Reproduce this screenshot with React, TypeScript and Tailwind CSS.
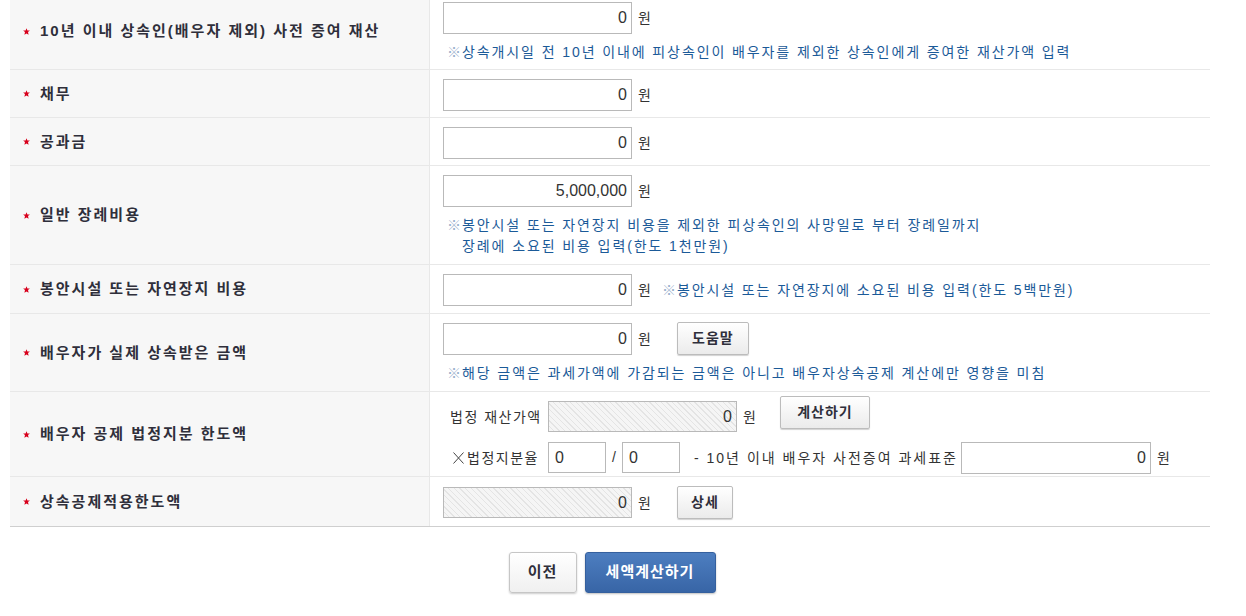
import type { ReactNode } from 'react';

const FONT = "font-['Liberation_Sans','Noto_Sans_CJK_KR',sans-serif]";

function Star() {
  return (
    <svg className="w-[7px] h-[7px] mr-[10px] shrink-0" viewBox="0 0 7 7">
      <path d="M3.5 0.3 L4.4 2.5 L6.9 2.6 L5 4.1 L5.6 6.8 L3.5 5.4 L1.4 6.8 L2 4.1 L0.1 2.6 L2.6 2.5Z" fill="#d8001c" />
    </svg>
  );
}

function Row({
  label,
  children,
  last,
  pad = 'pt-[9px] pb-[6px]',
}: {
  label: string;
  children: ReactNode;
  last?: boolean;
  pad?: string;
}) {
  return (
    <div className={last ? 'flex border-b border-[#cfcfcf]' : 'flex border-b border-[#e8e8e8]'}>
      <div className="w-[420px] shrink-0 bg-[#f7f7f7] border-r border-[#e8e8e8] flex items-center pl-[13px]">
        <Star />
        <span className="text-[15px] font-bold text-[#2f2f3b] tracking-[2px] leading-[20px]">{label}</span>
      </div>
      <div className={`flex-1 pl-[13px] ${pad}`}>{children}</div>
    </div>
  );
}

function Amount({ value = '0', disabled, w = 'w-[189px]' }: { value?: string; disabled?: boolean; w?: string }) {
  return (
    <input
      readOnly
      value={value}
      className={
        disabled
          ? `${w} shrink-0 h-[31px] border border-[#b9b9b9] text-right pr-[4px] text-[16px] text-[#333] outline-none bg-[repeating-linear-gradient(45deg,#f5f5f5_0px,#f5f5f5_3px,#e4e4e4_3px,#e4e4e4_4px)]`
          : `${w} shrink-0 h-[32px] border border-[#b9b9b9] text-right pr-[4px] text-[16px] text-[#333] outline-none bg-white`
      }
    />
  );
}

function Small() {
  return (
    <input
      readOnly
      value="0"
      className="w-[58px] shrink-0 h-[31px] border border-[#b9b9b9] text-left pl-[6px] text-[16px] text-[#333] outline-none bg-white"
    />
  );
}

function Won() {
  return <span className="ml-[6px] shrink-0 text-[14px] text-[#333] leading-[20px]">원</span>;
}

function Note({ children, inline }: { children: ReactNode; inline?: boolean }) {
  return (
    <div
      className={
        inline
          ? 'flex ml-[11px] text-[14px] leading-[21px] text-[#1b5a98] tracking-[1.9px]'
          : 'flex mt-[8px] pl-[4px] text-[14px] leading-[21px] text-[#1b5a98] tracking-[1.9px]'
      }
    >
      <span className="text-[#98afcc] tracking-normal mr-[1px]">※</span>
      <span>{children}</span>
    </div>
  );
}

function Btn({ children, w }: { children: ReactNode; w: string }) {
  return (
    <button
      className={`${w} shrink-0 h-[33px] border border-[#bcbcbc] rounded-[2px] bg-gradient-to-b from-white to-[#ebebeb] shadow-[0_1px_1px_rgba(0,0,0,0.18)] text-[14px] font-bold text-[#2f2f3b] tracking-[1px]`}
    >
      {children}
    </button>
  );
}

export default function App() {
  return (
    <div className={`${FONT} bg-white min-h-[616px] overflow-hidden`}>
      <div className="ml-[10px] w-[1200px] -mt-[7px]">
        <Row label="10년 이내 상속인(배우자 제외) 사전 증여 재산">
          <div className="flex items-center">
            <Amount />
            <Won />
          </div>
          <Note>상속개시일 전 10년 이내에 피상속인이 배우자를 제외한 상속인에게 증여한 재산가액 입력</Note>
        </Row>

        <Row label="채무">
          <div className="flex items-center">
            <Amount />
            <Won />
          </div>
        </Row>

        <Row label="공과금">
          <div className="flex items-center">
            <Amount />
            <Won />
          </div>
        </Row>

        <Row label="일반 장례비용">
          <div className="flex items-center">
            <Amount value="5,000,000" />
            <Won />
          </div>
          <div className="pb-[1px]">
            <Note>
              봉안시설 또는 자연장지 비용을 제외한 피상속인의 사망일로 부터 장례일까지
              <br />
              장례에 소요된 비용 입력(한도 1천만원)
            </Note>
          </div>
        </Row>

        <Row label="봉안시설 또는 자연장지 비용" pad="pt-[9px] pb-[7px]">
          <div className="flex items-center">
            <Amount />
            <Won />
            <Note inline>봉안시설 또는 자연장지에 소요된 비용 입력(한도 5백만원)</Note>
          </div>
        </Row>

        <Row label="배우자가 실제 상속받은 금액" pad="pt-[8px] pb-[7px]">
          <div className="flex items-center">
            <Amount />
            <Won />
            <div className="ml-[26px]">
              <Btn w="w-[72px]">도움말</Btn>
            </div>
          </div>
          <Note>해당 금액은 과세가액에 가감되는 금액은 아니고 배우자상속공제 계산에만 영향을 미침</Note>
        </Row>

        <Row label="배우자 공제 법정지분 한도액" pad="pt-[9px] pb-[3px]">
          <div className="pl-[7px]">
            <div className="flex items-center h-[31px]">
              <span className="w-[98px] shrink-0 text-[14px] text-[#333] leading-[20px] tracking-[1.5px]">법정 재산가액</span>
              <Amount disabled />
              <Won />
              <div className="ml-[24px] -mt-[8px]">
                <Btn w="w-[90px]">계산하기</Btn>
              </div>
            </div>
            <div className="flex items-center h-[31px] mt-[10px]">
              <span className="w-[98px] shrink-0 flex items-center text-[14px] text-[#333] leading-[20px] tracking-[1.5px]">
                <svg className="w-[11px] h-[12px] ml-[3px] mr-[3px] shrink-0" viewBox="0 0 11 12">
                  <path d="M0.5 0.5 L10.5 11.5 M10.5 0.5 L0.5 11.5" stroke="#444" strokeWidth="1" fill="none" />
                </svg>
                법정지분율
              </span>
              <Small />
              <span className="w-[16px] shrink-0 text-center text-[14px] text-[#333]">/</span>
              <Small />
              <span className="ml-[14px] w-[267px] shrink-0 text-[14px] text-[#333] leading-[20px] tracking-[2px]">
                - 10년 이내 배우자 사전증여 과세표준
              </span>
              <Amount w="w-[190px]" />
              <Won />
            </div>
          </div>
        </Row>

        <Row label="상속공제적용한도액" last pad="pt-[9px] pb-[7px]">
          <div className="flex items-center">
            <Amount disabled />
            <Won />
            <div className="ml-[26px]">
              <Btn w="w-[56px]">상세</Btn>
            </div>
          </div>
        </Row>
      </div>

      <div className="ml-[10px] w-[1200px] mt-[25px] pl-[4px] flex justify-center gap-[8px]">
        <button className="w-[68px] h-[41px] border border-[#c6c6c6] rounded-[3px] bg-gradient-to-b from-white to-[#f0f0f0] shadow-[0_1px_2px_rgba(0,0,0,0.2)] text-[15px] font-bold text-[#2f2f3b] tracking-[1px]">
          이전
        </button>
        <button className="w-[131px] h-[41px] border border-[#35609e] rounded-[3px] bg-gradient-to-b from-[#4d7ec0] to-[#3865a6] shadow-[0_1px_2px_rgba(0,0,0,0.25)] text-[15px] font-bold text-white tracking-[1px]">
          세액계산하기
        </button>
      </div>
    </div>
  );
}
